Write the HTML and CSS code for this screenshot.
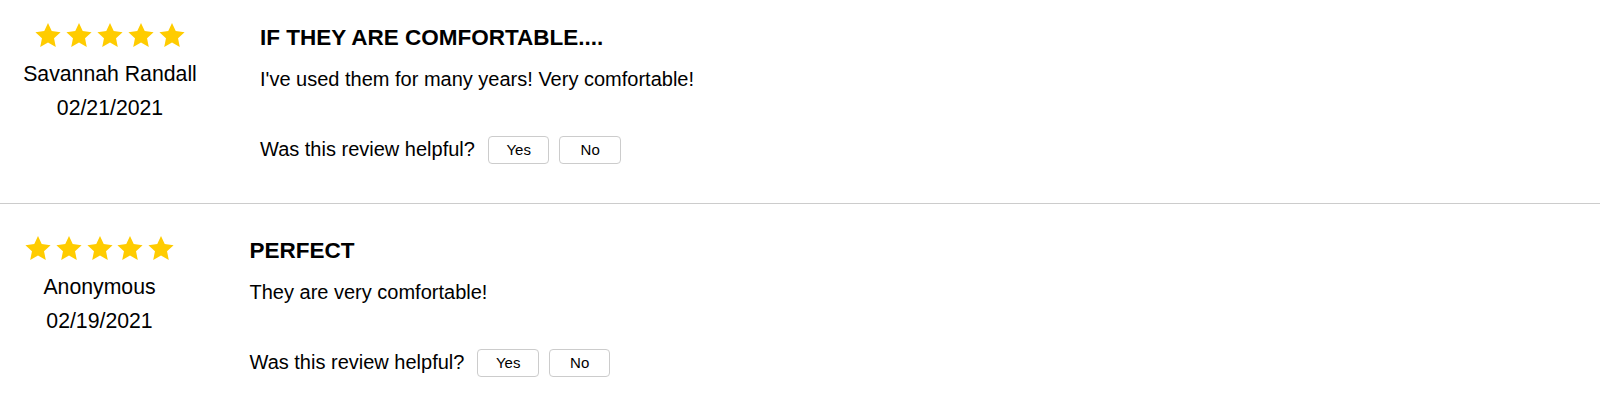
FILE: index.html
```html
<!DOCTYPE html>
<html lang="en">
<head>
<meta charset="utf-8">
<title>Reviews</title>
<link rel="stylesheet" href="styles.css">
</head>
<body>
<div class="reviews">
  <div class="review review--first">
    <div class="review__meta">
      <div class="stars">
        <svg class="star" viewBox="0 0 26 24.5"><polygon points="13,0 16.81,8.26 25.84,9.33 19.16,15.5 20.94,24.42 13,19.98 5.06,24.42 6.84,15.5 0.16,9.33 9.19,8.26"/></svg>
        <svg class="star" viewBox="0 0 26 24.5"><polygon points="13,0 16.81,8.26 25.84,9.33 19.16,15.5 20.94,24.42 13,19.98 5.06,24.42 6.84,15.5 0.16,9.33 9.19,8.26"/></svg>
        <svg class="star" viewBox="0 0 26 24.5"><polygon points="13,0 16.81,8.26 25.84,9.33 19.16,15.5 20.94,24.42 13,19.98 5.06,24.42 6.84,15.5 0.16,9.33 9.19,8.26"/></svg>
        <svg class="star" viewBox="0 0 26 24.5"><polygon points="13,0 16.81,8.26 25.84,9.33 19.16,15.5 20.94,24.42 13,19.98 5.06,24.42 6.84,15.5 0.16,9.33 9.19,8.26"/></svg>
        <svg class="star" viewBox="0 0 26 24.5"><polygon points="13,0 16.81,8.26 25.84,9.33 19.16,15.5 20.94,24.42 13,19.98 5.06,24.42 6.84,15.5 0.16,9.33 9.19,8.26"/></svg>
      </div>
      <div class="review__author">Savannah Randall</div>
      <div class="review__date">02/21/2021</div>
    </div>
    <div class="review__body">
      <h3 class="review__title">IF THEY ARE COMFORTABLE....</h3>
      <p class="review__text">I've used them for many years! Very comfortable!</p>
      <div class="helpful">
        <span class="helpful__label">Was this review helpful?</span>
        <button class="helpful__btn">Yes</button>
        <button class="helpful__btn">No</button>
      </div>
    </div>
  </div>
  <div class="review review--second">
    <div class="review__meta">
      <div class="stars">
        <svg class="star" viewBox="0 0 26 24.5"><polygon points="13,0 16.81,8.26 25.84,9.33 19.16,15.5 20.94,24.42 13,19.98 5.06,24.42 6.84,15.5 0.16,9.33 9.19,8.26"/></svg>
        <svg class="star" viewBox="0 0 26 24.5"><polygon points="13,0 16.81,8.26 25.84,9.33 19.16,15.5 20.94,24.42 13,19.98 5.06,24.42 6.84,15.5 0.16,9.33 9.19,8.26"/></svg>
        <svg class="star" viewBox="0 0 26 24.5"><polygon points="13,0 16.81,8.26 25.84,9.33 19.16,15.5 20.94,24.42 13,19.98 5.06,24.42 6.84,15.5 0.16,9.33 9.19,8.26"/></svg>
        <svg class="star" viewBox="0 0 26 24.5"><polygon points="13,0 16.81,8.26 25.84,9.33 19.16,15.5 20.94,24.42 13,19.98 5.06,24.42 6.84,15.5 0.16,9.33 9.19,8.26"/></svg>
        <svg class="star" viewBox="0 0 26 24.5"><polygon points="13,0 16.81,8.26 25.84,9.33 19.16,15.5 20.94,24.42 13,19.98 5.06,24.42 6.84,15.5 0.16,9.33 9.19,8.26"/></svg>
      </div>
      <div class="review__author">Anonymous</div>
      <div class="review__date">02/19/2021</div>
    </div>
    <div class="review__body">
      <h3 class="review__title">PERFECT</h3>
      <p class="review__text">They are very comfortable!</p>
      <div class="helpful">
        <span class="helpful__label">Was this review helpful?</span>
        <button class="helpful__btn">Yes</button>
        <button class="helpful__btn">No</button>
      </div>
    </div>
  </div>
</div>
</body>
</html>
```
FILE: styles.css
```css
html, body {
  margin: 0;
  padding: 0;
  background: #fff;
}

body {
  font-family: "Liberation Sans", Arial, sans-serif;
  color: #000;
}

.reviews {
  display: flex;
  flex-direction: column;
}

.review {
  display: flex;
  align-items: flex-start;
  gap: 55px;
  padding-bottom: 39px;
}

.review--first {
  padding-top: 23px;
  padding-left: 15px;
  border-bottom: 1px solid #cccccc;
}

.review--second {
  padding-top: 32px;
  padding-left: 4.5px;
}

.review__meta {
  width: 190px;
  flex: none;
  display: flex;
  flex-direction: column;
  align-items: center;
  text-align: center;
}

.stars {
  display: flex;
  gap: 4.8px;
  height: 24px;
  margin-bottom: 10px;
}

.star {
  width: 26px;
  height: 24px;
  display: block;
  fill: #ffcc00;
}

.review__author,
.review__date {
  font-size: 21.25px;
  line-height: 34px;
  white-space: nowrap;
}

.review__body {
  display: flex;
  flex-direction: column;
  align-items: flex-start;
}

.review__title {
  margin: 2.2px 0 0;
  font-size: 22.5px;
  line-height: 26px;
  font-weight: bold;
}

.review__text {
  margin: 16.4px 0 0;
  font-size: 20px;
  line-height: 23px;
}

.helpful {
  margin-top: 45.4px;
  display: flex;
  align-items: center;
}

.helpful__label {
  font-size: 20px;
  line-height: 23px;
  margin-right: 13px;
}

.helpful__btn {
  width: 61.5px;
  height: 28px;
  margin: 0 10px 0 0;
  padding: 0;
  background: #fff;
  border: 1px solid #cccccc;
  border-radius: 4px;
  font-family: "Liberation Sans", Arial, sans-serif;
  font-size: 15px;
  color: #000;
}
```
